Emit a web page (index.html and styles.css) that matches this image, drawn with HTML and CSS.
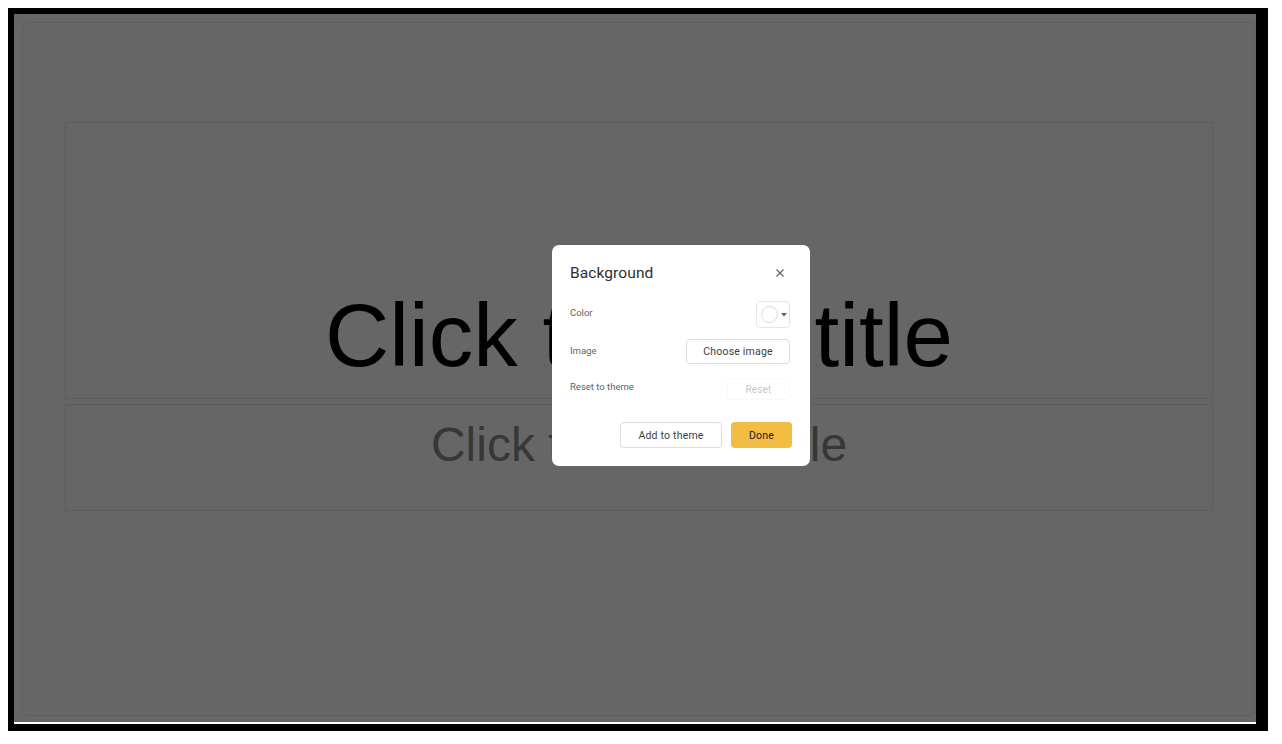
FILE: index.html
```html
<!doctype html>
<html>
<head>
<meta charset="utf-8"/>
<title>Background</title>
<link rel="stylesheet" href="styles.css">
</head>
<body>
<div class="frame">
	<div class="stage">
		<div class="slide">
			<div class="ph ph-title"><span>Click to add title</span></div>
			<div class="ph ph-sub"><span>Click to add subtitle</span></div>
		</div>
		<div class="dialog">
			<div class="dlg-head">
				<span class="dlg-title">Background</span>
				<svg class="dlg-close" width="10" height="10" viewBox="0 0 10 10"><path d="M1.5 1.5L8.5 8.5M8.5 1.5L1.5 8.5" stroke="#5f6368" stroke-width="1.2"/></svg>
			</div>
			<div class="row row-color">
				<span class="label">Color</span>
				<div class="swatch">
					<span class="circle"></span>
					<svg width="6" height="4" viewBox="0 0 6 4"><path d="M0 0H6L3 3.5Z" fill="#5f6368"/></svg>
				</div>
			</div>
			<div class="row row-image">
				<span class="label">Image</span>
				<div class="btn btn-choose">Choose image</div>
			</div>
			<div class="row row-reset">
				<span class="label">Reset to theme</span>
				<div class="btn btn-reset">Reset</div>
			</div>
			<div class="dlg-foot">
				<div class="btn btn-add">Add to theme</div>
				<div class="btn btn-done">Done</div>
			</div>
		</div>
	</div>
</div>
</body>
</html>
```

FILE: styles.css
```css
body {
	margin: 0;
	background: #fff;
}
.frame {
	margin: 8px 0 0 8px;
	width: 1242px;
	border-style: solid;
	border-color: #000;
	border-width: 6px 12px 7px 6px;
}
.stage {
	position: relative;
	background: #666;
	border-bottom: 2px solid #fff;
	padding: 8px 1px 6px 8px;
	box-sizing: border-box;
	height: 710px;
}
.slide {
	height: 100%;
	border: 1px solid #5e5e5e;
	border-radius: 4px;
	box-sizing: border-box;
	padding: 99px 41px 0 42px;
	display: flex;
	flex-direction: column;
	gap: 5px;
}
.ph {
	border: 1px solid #5d5d5d;
	display: flex;
	justify-content: center;
	font-family: "Liberation Sans", Arial, sans-serif;
}
.ph-title {
	height: 277px;
	box-sizing: border-box;
	align-items: flex-end;
	padding-bottom: 11px;
	font-size: 89px;
	color: #000;
}
.ph-sub {
	height: 107px;
	box-sizing: border-box;
	align-items: flex-start;
	padding-top: 12px;
	font-size: 48px;
	color: #373737;
}
.dialog {
	position: absolute;
	left: 538px;
	top: 231px;
	width: 258px;
	height: 221px;
	box-sizing: border-box;
	background: #fff;
	border-radius: 7px;
	padding: 18px 18px 0 18px;
	font-family: Roboto, "Noto Sans", sans-serif;
	color: #3c4043;
}
.dlg-head {
	height: 20px;
	display: flex;
	align-items: center;
	justify-content: space-between;
	margin-bottom: 18px;
}
.dlg-title {
	font-size: 15.5px;
	color: #2d2f31;
	letter-spacing: 0.1px;
}
.dlg-close {
	margin-right: 7px;
}
.row {
	display: flex;
	align-items: center;
	justify-content: space-between;
	margin-right: 2px;
}
.label {
	font-size: 9.5px;
	color: #5f6368;
}
.row-color {
	height: 27px;
	margin-bottom: 11px;
}
.row-color .label {
	margin-top: -5px;
}
.row-image {
	height: 25px;
	margin-bottom: 14px;
}
.row-image .label {
	margin-top: -3px;
}
.row-reset {
	height: 22px;
}
.row-reset .label {
	margin-top: -6px;
}
.swatch {
	width: 34px;
	height: 27px;
	box-sizing: border-box;
	border: 1px solid #e3e5e8;
	border-radius: 4px;
	display: flex;
	align-items: center;
	gap: 3px;
	padding-left: 4px;
}
.circle {
	width: 17px;
	height: 17px;
	border: 1px solid #dadce0;
	border-radius: 50%;
	box-sizing: border-box;
}
.btn {
	box-sizing: border-box;
	border-radius: 4px;
	display: flex;
	align-items: center;
	justify-content: center;
	font-size: 10.5px;
	color: #3c4043;
	letter-spacing: 0.2px;
}
.btn-choose {
	width: 104px;
	height: 25px;
	border: 1px solid #dadce0;
}
.btn-reset {
	width: 63px;
	height: 22px;
	border: 1px dotted #f1f3f4;
	color: #c4c7cb;
	font-size: 10px;
}
.dlg-foot {
	display: flex;
	justify-content: flex-end;
	gap: 9px;
	margin-top: 22px;
}
.btn-add {
	width: 102px;
	height: 26px;
	border: 1px solid #dadce0;
}
.btn-done {
	width: 61px;
	height: 26px;
	background: #f1bd43;
	color: #202124;
}
```
